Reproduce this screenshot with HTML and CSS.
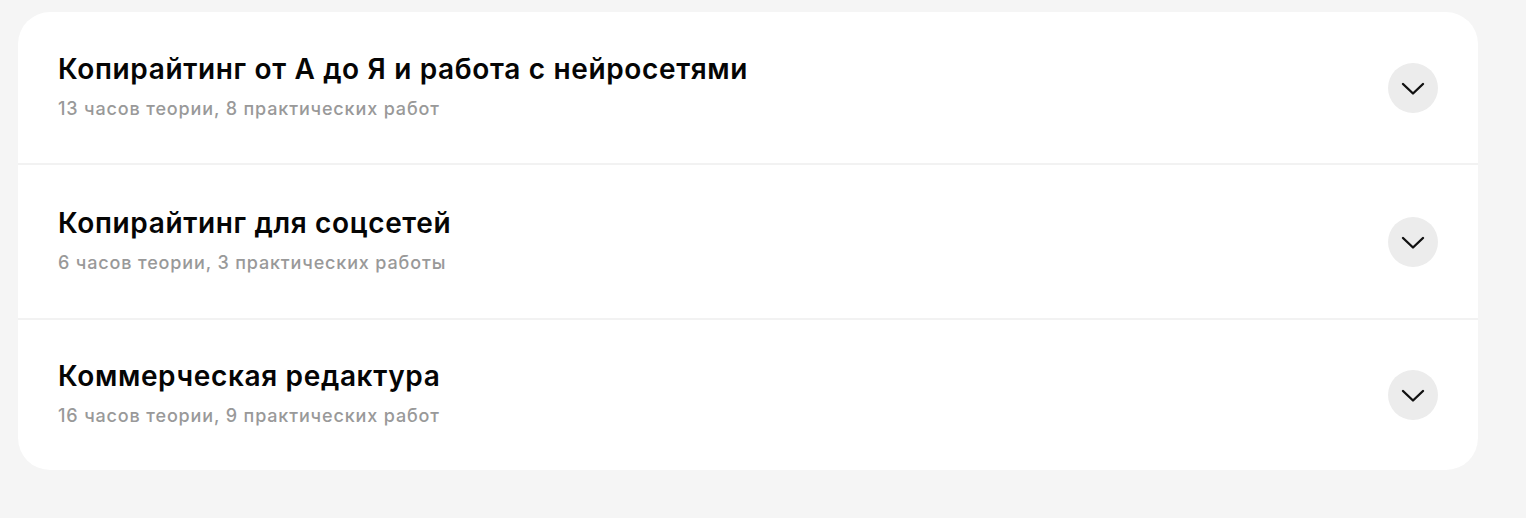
FILE: index.html
```html
<!DOCTYPE html>
<html lang="ru">
<head>
<meta charset="utf-8">
<link rel="stylesheet" href="styles.css">
</head>
<body>
<div class="page">
  <div class="accordion">
    <div class="item">
      <div class="info">
        <div class="title">Копирайтинг от А до Я и работа с нейросетями</div>
        <div class="meta">13 часов теории, 8 практических работ</div>
      </div>
      <button class="toggle" aria-label="Развернуть"><svg width="24" height="14" viewBox="0 0 24 14"><path d="M2 2 L12 11.5 L22 2" fill="none" stroke="#111" stroke-width="2.4" stroke-linecap="round" stroke-linejoin="round"/></svg></button>
    </div>
    <div class="item">
      <div class="info">
        <div class="title">Копирайтинг для соцсетей</div>
        <div class="meta">6 часов теории, 3 практических работы</div>
      </div>
      <button class="toggle" aria-label="Развернуть"><svg width="24" height="14" viewBox="0 0 24 14"><path d="M2 2 L12 11.5 L22 2" fill="none" stroke="#111" stroke-width="2.4" stroke-linecap="round" stroke-linejoin="round"/></svg></button>
    </div>
    <div class="item">
      <div class="info">
        <div class="title">Коммерческая редактура</div>
        <div class="meta">16 часов теории, 9 практических работ</div>
      </div>
      <button class="toggle" aria-label="Развернуть"><svg width="24" height="14" viewBox="0 0 24 14"><path d="M2 2 L12 11.5 L22 2" fill="none" stroke="#111" stroke-width="2.4" stroke-linecap="round" stroke-linejoin="round"/></svg></button>
    </div>
  </div>
</div>
</body>
</html>
```
FILE: styles.css
```css
html, body {
  margin: 0;
  padding: 0;
  background: #f5f5f5;
}
body {
  font-family: Inter, "Noto Sans", sans-serif;
  color: #0b0b0b;
}
.page {
  padding: 12px 48px 48px 18px;
}
.accordion {
  width: 1460px;
  display: flex;
  flex-direction: column;
  gap: 2px;
  background: #f2f2f2;
  border-radius: 32px;
  overflow: hidden;
}
.item {
  background: #fff;
  height: 151px;
  box-sizing: border-box;
  padding: 0 40px;
  display: flex;
  align-items: center;
  justify-content: space-between;
}
.item:nth-child(2) {
  height: 153px;
}
.item:nth-child(3) {
  height: 150px;
}
.info {
  padding-top: 2px;
}
.title {
  font-size: 28px;
  font-weight: 560;
  line-height: 32px;
  letter-spacing: 0.65px;
  margin-top: -4px;
  color: #050505;
}
.meta {
  margin-top: 12px;
  font-size: 18px;
  line-height: 24px;
  font-weight: 520;
  letter-spacing: 0.85px;
  color: #999;
}
.toggle {
  width: 50px;
  height: 50px;
  border-radius: 50%;
  border: none;
  background: #ececec;
  display: flex;
  align-items: center;
  justify-content: center;
  padding: 0;
  padding-top: 2px;
}
```
